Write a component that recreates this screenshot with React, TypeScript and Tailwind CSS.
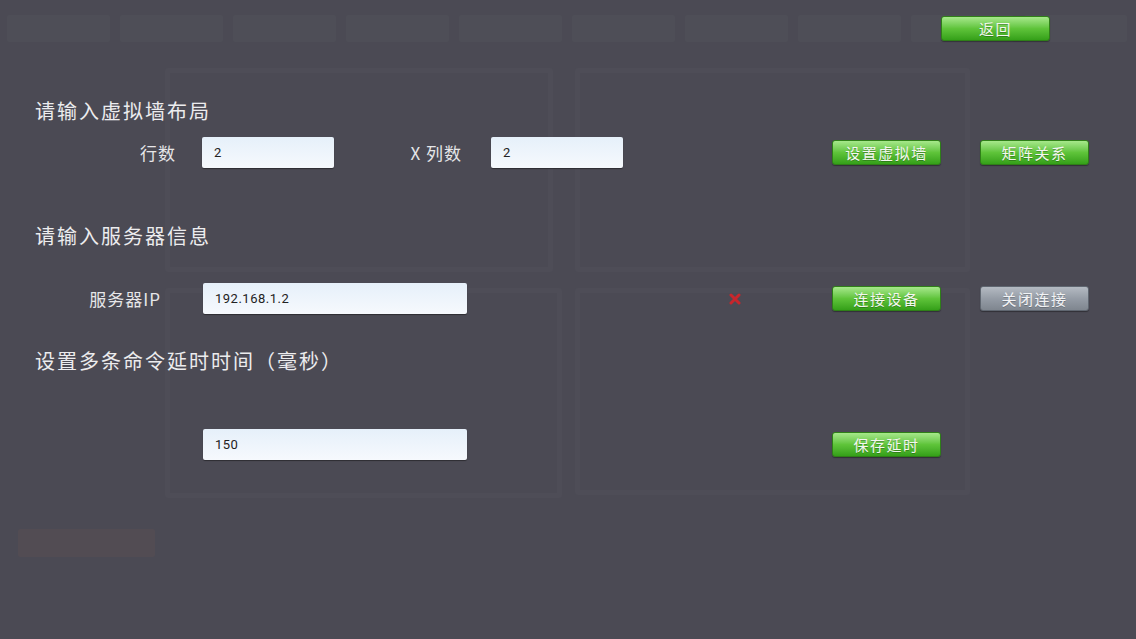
import React from 'react';

const font = { fontFamily: '"Noto Sans CJK SC", "Noto Sans", sans-serif' };

const tabs = Array.from({ length: 10 });

function GreenButton({ label }: { label: string }) {
  return (
    <button className="flex h-[25px] w-[109px] shrink-0 items-center justify-center rounded-[3px] border border-[#2f7f18] bg-gradient-to-b from-[#a6e88a] via-[#5fc43a] to-[#34a018] text-[15px] leading-none tracking-[1.5px] text-[#f3f7ef] shadow-[0_1px_1px_rgba(0,0,0,0.35)] [text-shadow:0_1px_0_rgba(0,0,0,0.25)]">
      {label}
    </button>
  );
}

function GrayButton({ label }: { label: string }) {
  return (
    <button className="flex h-[25px] w-[109px] shrink-0 items-center justify-center rounded-[3px] border border-[#5f6670] bg-gradient-to-b from-[#b4bac2] via-[#959ca6] to-[#7f868f] text-[15px] leading-none tracking-[1.5px] text-[#f2f3f5] shadow-[0_1px_1px_rgba(0,0,0,0.35)] [text-shadow:0_1px_0_rgba(0,0,0,0.2)]">
      {label}
    </button>
  );
}

function Field({ value, width }: { value: string; width: string }) {
  return (
    <div
      className={`flex h-[31px] ${width} shrink-0 items-center rounded-[2px] bg-gradient-to-b from-[#e6f0fa] to-[#f6f9fd] pl-[12px] text-[13px] tracking-[0.5px] text-[#222] shadow-[0_1px_1px_rgba(0,0,0,0.4)]`}
      style={{ fontFamily: 'Roboto, "Noto Sans", sans-serif' }}
    >
      {value}
    </div>
  );
}

function Heading({ text, mt }: { text: string; mt: string }) {
  return (
    <div className={`${mt} h-[24px] pl-[35px] text-[20px] leading-[24px] tracking-[2px] text-[#ececee]`}>
      {text}
    </div>
  );
}

function Backdrop() {
  return (
    <div className="flex h-[639px] w-[1136px] flex-col bg-[#4b4a54]">
      <div className="flex gap-[10px] pl-[7px] pt-[15px]">
        {tabs.map((_, i) => (
          <div key={i} className="h-[27px] w-[103px] rounded-[2px] bg-[#4e4e57]" />
        ))}
      </div>
      <div className="ml-[165px] mt-[26px] grid w-[805px] grid-cols-[388px_395px] gap-x-[22px] gap-y-[16px]">
        <div className="h-[204px] rounded-[3px] border-[5px] border-[#4e4d57]" />
        <div className="h-[204px] rounded-[3px] border-[5px] border-[#4e4d57]" />
        <div className="h-[210px] w-[397px] rounded-[3px] border-[5px] border-[#4e4d57]" />
        <div className="h-[207px] rounded-[3px] border-[5px] border-[#4e4d57]" />
      </div>
      <div className="ml-[18px] mt-[31px] h-[28px] w-[137px] rounded-[2px] bg-[#524c53]" />
    </div>
  );
}

export default function App() {
  return (
    <div className="relative h-[639px] w-[1136px] overflow-hidden" style={font}>
      <Backdrop />
      <div className="absolute inset-0 flex flex-col">
        <div className="flex justify-end pr-[86px] pt-[16px]">
          <GreenButton label="返回" />
        </div>

        <Heading text="请输入虚拟墙布局" mt="mt-[58px]" />
        <div className="mt-[14px] flex h-[31px] items-center">
          <div className="w-[176px] text-right text-[17px] tracking-[1px] text-[#e6e6e8]">行数</div>
          <div className="ml-[26px]">
            <Field value="2" width="w-[132px]" />
          </div>
          <div className="w-[128px] text-right text-[17px] tracking-[1px] text-[#e6e6e8]">X 列数</div>
          <div className="ml-[29px]">
            <Field value="2" width="w-[132px]" />
          </div>
          <div className="ml-[209px] flex gap-[39px]">
            <GreenButton label="设置虚拟墙" />
            <GreenButton label="矩阵关系" />
          </div>
        </div>

        <Heading text="请输入服务器信息" mt="mt-[56px]" />
        <div className="mt-[35px] flex h-[31px] items-center">
          <div className="w-[161px] text-right text-[17px] tracking-[1px] text-[#e6e6e8]">服务器IP</div>
          <div className="ml-[42px]">
            <Field value="192.168.1.2" width="w-[264px]" />
          </div>
          <div className="flex w-[365px] items-center pl-[262px]">
            <svg width="12" height="12" viewBox="0 0 12 12">
              <path d="M2 2 L10 10 M10 2 L2 10" stroke="#c8262c" strokeWidth="3" strokeLinecap="round" />
            </svg>
          </div>
          <div className="flex gap-[39px]">
            <GreenButton label="连接设备" />
            <GrayButton label="关闭连接" />
          </div>
        </div>

        <Heading text="设置多条命令延时时间（毫秒）" mt="mt-[35px]" />
        <div className="mt-[56px] flex h-[31px] items-center">
          <div className="ml-[203px]">
            <Field value="150" width="w-[264px]" />
          </div>
          <div className="ml-[365px]">
            <GreenButton label="保存延时" />
          </div>
        </div>
      </div>
    </div>
  );
}
